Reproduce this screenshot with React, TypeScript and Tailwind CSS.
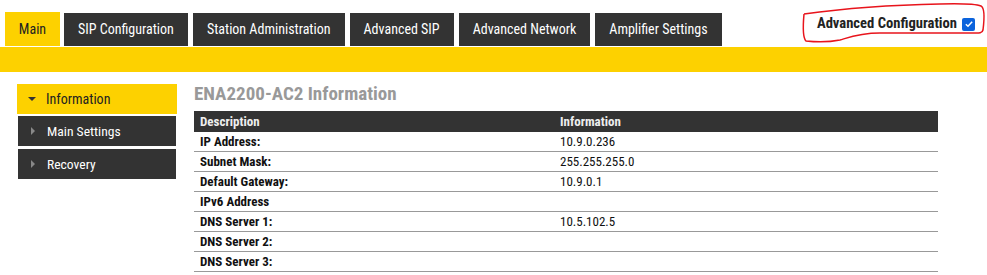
import React from 'react';

const FONT = '"Roboto Condensed", "Liberation Sans Narrow", "DejaVu Sans Condensed", Roboto, sans-serif';

const tabs = ['Main', 'SIP Configuration', 'Station Administration', 'Advanced SIP', 'Advanced Network', 'Amplifier Settings'];

const rows: [string, string][] = [
  ['IP Address:', '10.9.0.236'],
  ['Subnet Mask:', '255.255.255.0'],
  ['Default Gateway:', '10.9.0.1'],
  ['IPv6 Address', ''],
  ['DNS Server 1:', '10.5.102.5'],
  ['DNS Server 2:', ''],
  ['DNS Server 3:', ''],
];

function SideItem({ label, active }: { label: string; active?: boolean }) {
  return (
    <div
      className={
        active
          ? 'flex h-[30px] items-center bg-[#fdd100] pl-[10px] text-[14px] text-[#222]'
          : 'mx-px flex h-[30px] items-center bg-[#333333] pl-[10px] text-[13.6px] text-white'
      }
    >
      {active ? (
        <span className="ml-[1px] mr-[10px] h-0 w-0 border-x-[4px] border-t-[4px] border-x-transparent border-t-[#333]" />
      ) : (
        <span className="ml-[3px] mr-[12px] h-0 w-0 border-y-[4px] border-l-[4px] border-y-transparent border-l-[#888]" />
      )}
      {label}
    </div>
  );
}

export default function App() {
  return (
    <div className="relative h-[275px] w-[987px] overflow-hidden bg-white" style={{ fontFamily: FONT }}>
      <div className="flex items-end justify-between pl-[5px] pt-[12px]">
        <div className="flex items-end gap-[5px]">
          {tabs.map((t, i) =>
            i === 0 ? (
              <div key={t} className="mr-[-1px] flex h-[34px] w-[55px] items-center justify-center bg-[#fdd100] text-[14px] text-[#222]">
                {t}
              </div>
            ) : (
              <div key={t} className="flex h-[33px] items-center bg-[#333333] px-[14px] text-[14px] text-white">
                {t}
              </div>
            )
          )}
        </div>
        <label className="mb-[11px] mr-[12px] flex items-center gap-[5px] text-[14.6px] font-bold text-[#222]">
          Advanced Configuration
          <span className="flex h-[13px] w-[13px] items-center justify-center rounded-[2px] bg-[#0b63dc]">
            <svg viewBox="0 0 12 12" className="h-[10px] w-[10px]">
              <path d="M2.2 6.3 L4.8 8.7 L9.8 3.2" fill="none" stroke="white" strokeWidth="1.8" />
            </svg>
          </span>
        </label>
      </div>
      <div className="mt-px h-[25px] bg-[#fdd100]" />

      <div className="flex pt-[12px]">
        <div className="ml-[17px] flex w-[160px] flex-col">
          <SideItem label="Information" active />
          <div className="h-[2px]" />
          <SideItem label="Main Settings" />
          <div className="h-[3px]" />
          <SideItem label="Recovery" />
        </div>
        <div className="ml-[17px] w-[744px]">
          <div className="h-[27px] text-[19px] font-bold leading-[20px] text-[#999]">ENA2200-AC2 Information</div>
          <div className="text-[13px]">
            <div className="flex h-[21px] items-center bg-[#333333] font-bold text-[#eee]">
              <div className="w-[360px] pl-[6px]">Description</div>
              <div className="pl-[6px]">Information</div>
            </div>
            {rows.map(([k, v]) => (
              <div key={k} className="flex h-[20px] items-center border-b border-[#999] text-[#111]">
                <div className="w-[360px] pl-[6px] font-bold">{k}</div>
                <div className="pl-[6px]">{v}</div>
              </div>
            ))}
          </div>
        </div>
      </div>

      <svg className="pointer-events-none absolute left-[800px] top-0 h-[46px] w-[187px]" viewBox="0 0 187 46" fill="none">
        <path
          d="M4 14 C40 9 90 5 140 4 C160 3.5 176 4 181 6 C185 8 184 22 183 30 C182 34 178 33 170 33 C140 33 110 33 80 33 C60 33 50 37 40 40 C30 42 15 42 6 41 C3 38 3 25 4 14"
          stroke="#e8141c"
          strokeWidth="1.5"
        />
      </svg>
    </div>
  );
}
